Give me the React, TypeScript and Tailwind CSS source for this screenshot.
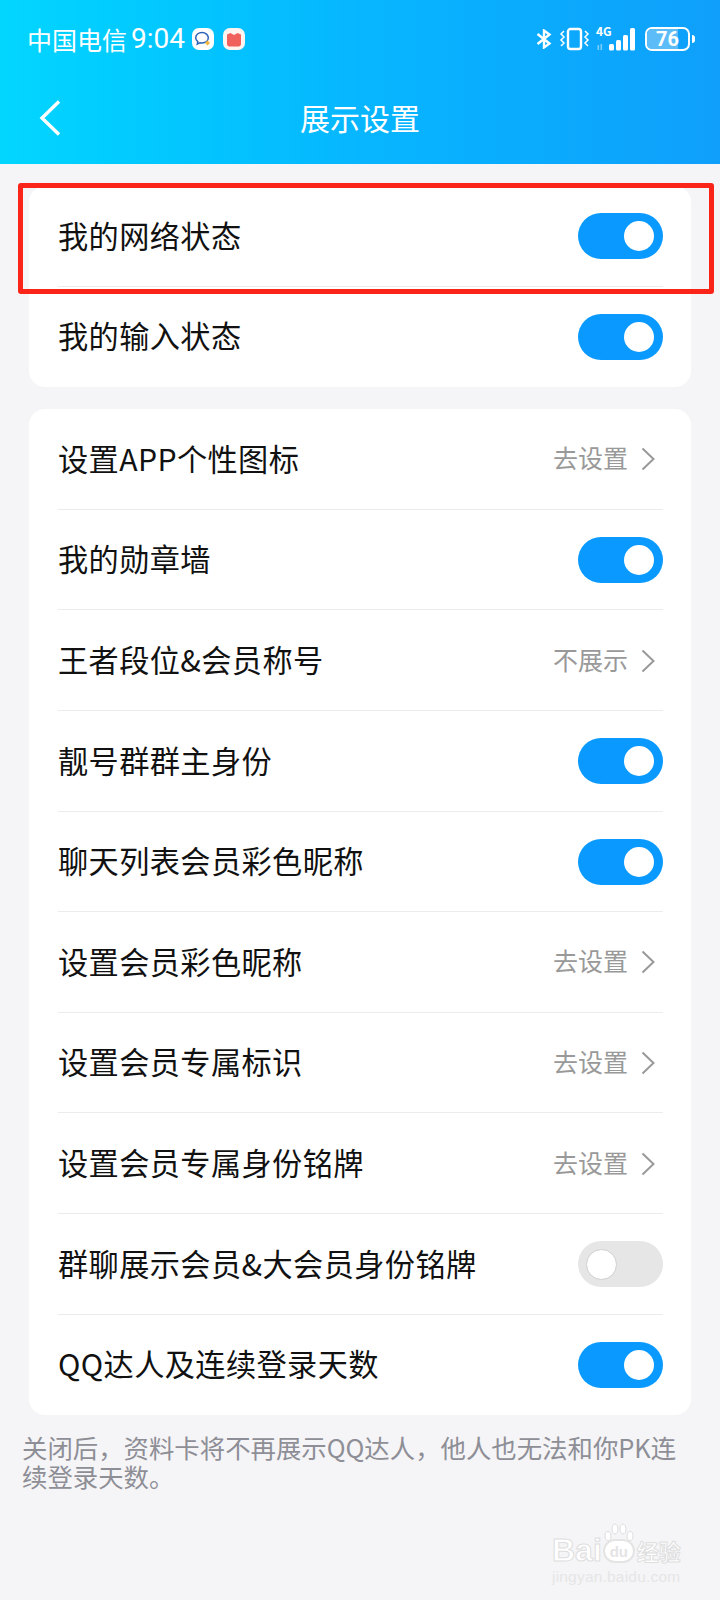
type Row = { label: string; on?: boolean; value?: string }

const firstGroup: Row[] = [
  { label: '我的网络状态', on: true },
  { label: '我的输入状态', on: true },
]

const secondGroup: Row[] = [
  { label: '设置APP个性图标', value: '去设置' },
  { label: '我的勋章墙', on: true },
  { label: '王者段位&会员称号', value: '不展示' },
  { label: '靓号群群主身份', on: true },
  { label: '聊天列表会员彩色昵称', on: true },
  { label: '设置会员彩色昵称', value: '去设置' },
  { label: '设置会员专属标识', value: '去设置' },
  { label: '设置会员专属身份铭牌', value: '去设置' },
  { label: '群聊展示会员&大会员身份铭牌', on: false },
  { label: 'QQ达人及连续登录天数', on: true },
]

function Toggle({ on }: { on: boolean }) {
  if (on) {
    return (
      <span className="flex h-[46px] w-[85px] items-center justify-end rounded-full bg-[#0a9aff] pr-[9px]">
        <span className="h-[30px] w-[30px] rounded-full bg-white" />
      </span>
    )
  }
  return (
    <span className="flex h-[46px] w-[85px] items-center rounded-full bg-[#e6e6e6] pl-[8px]">
      <span className="h-[31px] w-[31px] rounded-full border border-[#cfcfcf] bg-white" />
    </span>
  )
}

function SettingRow({ row, last }: { row: Row; last: boolean }) {
  return (
    <div className="relative flex h-[100.6px] items-center justify-between pl-[29px] pr-[28px]">
      <span className="pb-[3px] text-[30.2px] leading-none tracking-[0.4px] text-[#111]">{row.label}</span>
      {row.value ? (
        <span className="flex items-center pr-[8px]">
          <span className="pb-[3px] text-[25px] leading-none text-[#999]">{row.value}</span>
          <svg width="14" height="24" viewBox="0 0 14 24" className="ml-[13px]" fill="none" stroke="#999" strokeWidth="2">
            <path d="M1.5 1.5 12.5 12 1.5 22.5" />
          </svg>
        </span>
      ) : (
        <Toggle on={!!row.on} />
      )}
      {!last && <span className="absolute bottom-0 left-[29px] right-[28px] h-px bg-[#ececec]" />}
    </div>
  )
}

function Group({ rows }: { rows: Row[] }) {
  return (
    <div className="mx-[29px] overflow-hidden rounded-[16px] bg-white">
      {rows.map((row, i) => (
        <SettingRow key={row.label} row={row} last={i === rows.length - 1} />
      ))}
    </div>
  )
}

function StatusIcons() {
  return (
    <div className="flex items-center text-white">
      <svg width="16" height="20" viewBox="0 0 16 20" fill="none" stroke="white" strokeWidth="2.4" className="mr-[7px]">
        <path d="M1.5 5 13.5 14.5 8 18.5V1.5L13.5 5.5 1.5 15" />
      </svg>
      <svg width="31" height="24" viewBox="0 0 31 24" fill="none" stroke="white" strokeWidth="2" className="mr-[6px]">
        <rect x="9" y="2" width="13" height="20" rx="2.5" strokeWidth="2.4" />
        <path d="M5 4 2 7l3 3-3 3 3 3-3 3M26 4l3 3-3 3 3 3-3 3 3 3" strokeWidth="1.5" />
      </svg>
      <div className="relative mr-[7px] h-[24px] w-[42px]">
        <span className="absolute left-0 top-[-3px] text-[12px] font-bold leading-[14px] text-white">4G</span>
        <svg width="42" height="24" viewBox="0 0 42 24" className="absolute left-0 top-0" fill="white">
          <path d="M1.5 18h1.6v5H1.5zM4.5 17h1.6v6H4.5z" opacity=".45" />
          <rect x="13" y="17" width="5" height="6.5" rx="1.5" />
          <rect x="20" y="13" width="5" height="10.5" rx="1.5" />
          <rect x="27" y="8" width="5" height="15.5" rx="1.5" />
          <rect x="34" y="1" width="5" height="22.5" rx="1.5" />
        </svg>
      </div>
      <div className="relative flex h-[24px] w-[45px] items-center justify-center overflow-hidden rounded-[7px] border-2 border-white">
        <span className="absolute inset-y-0 left-0 w-[76%] bg-[#5cbcf8]" />
        <span className="relative font-['Roboto',sans-serif] text-[20px] font-bold leading-none text-white">76</span>
      </div>
      <span className="ml-[2px] h-[8px] w-[3px] rounded-r-full bg-white" />
    </div>
  )
}

function Header() {
  return (
    <header className="flex h-[164px] flex-col bg-gradient-to-r from-[#02d6ff] via-[#07b6ff] to-[#0f9ffb] text-white">
      <div className="flex h-[78px] items-center justify-between pl-[27px] pr-[25px]">
        <div className="flex items-center">
          <span className="text-[25px] leading-none">中国电信</span>
          <span className="ml-[4px] font-['Roboto',sans-serif] text-[28px] leading-none">9:04</span>
          <span className="ml-[7px] flex h-[22px] w-[22px] items-center justify-center rounded-[7px] bg-white">
            <svg width="18" height="18" viewBox="0 0 18 18" fill="none">
              <path d="M8 2.5c-3.6 0-6.3 2.300-6.300 5.300 0 1.600.8 3 2.100 3.900l-.5 2.400 2.700-1.400c.6.1 1.300.2 2 .2 3.600 0 6.300-2.200 6.300-5.100S11.600 2.500 8 2.500Z" stroke="#2b62b8" strokeWidth="1.500" />
              <path d="M13.500 10.500 16 13l-2.500 2.500L11 13z" fill="#f3b73c" />
            </svg>
          </span>
          <span className="ml-[9px] flex h-[22px] w-[22px] items-center justify-center rounded-[7px] bg-[#fff4ef]">
            <svg width="16" height="15" viewBox="0 0 16 15">
              <path d="M1 2.500 4.500 1 8 3l3.500-2L15 2.500V12c0 1.500-1 2.500-2.500 2.500h-9C2 14.500 1 13.500 1 12z" fill="#f0605c" />
            </svg>
          </span>
        </div>
        <StatusIcons />
      </div>
      <div className="grid h-[82px] grid-cols-[1fr_auto_1fr] items-center pb-[2px]">
        <svg width="22" height="36" viewBox="0 0 22 36" fill="none" stroke="white" strokeWidth="3.4" className="ml-[39px]">
          <path d="M20 1.500 3 18l17 16.500" />
        </svg>
        <h1 className="pb-[3px] text-[30px] font-normal leading-none">展示设置</h1>
      </div>
    </header>
  )
}

function Watermark() {
  const sans = "font-['Liberation_Sans',sans-serif]"
  return (
    <div className="absolute left-[552px] top-[1523px] w-[132px] whitespace-nowrap">
      <div className="flex h-[40px] items-end">
        <span className={`${sans} text-[32px] font-bold leading-[25px] text-white [-webkit-text-stroke:1px_#dedede]`}>Bai</span>
        <span className="relative ml-[1px] flex h-[24px] w-[32px] items-center justify-center rounded-[14px] border-2 border-[#e4e4e4] bg-white">
          <span className={`${sans} text-[15px] font-bold leading-none text-[#e4e4e4]`}>du</span>
          <svg width="32" height="20" viewBox="0 0 32 20" fill="white" stroke="#dedede" strokeWidth="1" className="absolute left-[-2px] top-[-18px]">
            <ellipse cx="5" cy="13" rx="3" ry="4.500" />
            <ellipse cx="12" cy="6" rx="3" ry="5" />
            <ellipse cx="20" cy="6" rx="3" ry="5" />
            <ellipse cx="27" cy="13" rx="3" ry="4.500" />
          </svg>
        </span>
        <span className="ml-[2px] text-[22px] font-bold leading-[25px] text-white [-webkit-text-stroke:1px_#dedede]">经验</span>
      </div>
      <div className={`${sans} mt-[6px] text-[15.5px] leading-none tracking-[0.2px] text-[#e6e6e6]`}>jingyan.baidu.com</div>
    </div>
  )
}

export default function App() {
  return (
    <div className="relative h-[1600px] w-[720px] overflow-hidden bg-[#f5f5f7] font-['Noto_Sans_CJK_SC','Noto_Sans',sans-serif]">
      <Header />
      <div className="pt-[22px]">
        <Group rows={firstGroup} />
      </div>
      <div className="pt-[22px]">
        <Group rows={secondGroup} />
      </div>
      <p className="mt-[18px] px-[22px] text-[25.4px] leading-[29px] text-[#8e8e96]">
        关闭后，资料卡将不再展示QQ达人，他人也无法和你PK连续登录天数。
      </p>
      <Watermark />
      <div className="absolute left-[18px] top-[183px] h-[111px] w-[696px] rounded-[3px] border-[5px] border-[#fb2418]" />
    </div>
  )
}
